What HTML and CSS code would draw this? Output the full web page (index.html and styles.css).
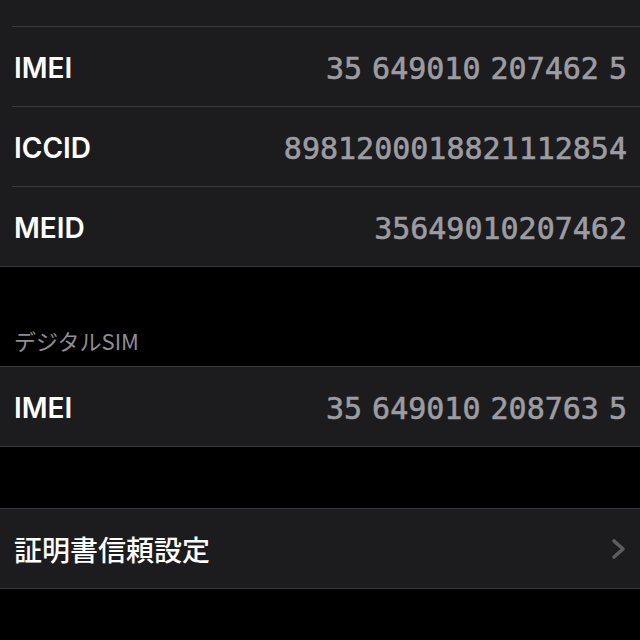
FILE: index.html
```html
<!DOCTYPE html>
<html lang="ja">
<head>
    <meta charset="UTF-8">
    <title>情報</title>
    <link rel="stylesheet" href="styles.css">
</head>
<body>
    <div class="group group-top">
        <div class="row row-partial"></div>
        <div class="row">
            <span class="label">IMEI</span>
            <span class="value">35 649010 207462 5</span>
        </div>
        <div class="row">
            <span class="label">ICCID</span>
            <span class="value">8981200018821112854</span>
        </div>
        <div class="row">
            <span class="label">MEID</span>
            <span class="value">35649010207462</span>
        </div>
    </div>

    <div class="group-header">デジタルSIM</div>

    <div class="group">
        <div class="row">
            <span class="label">IMEI</span>
            <span class="value">35 649010 208763 5</span>
        </div>
    </div>

    <div class="spacer"></div>

    <div class="group">
        <div class="row">
            <span class="label label-jp">証明書信頼設定</span>
            <svg class="chevron" width="16" height="22" viewBox="0 0 16 22">
                <polyline points="3,3 12,11 3,19" fill="none" stroke="#5c5c61" stroke-width="3.6" stroke-linecap="round" stroke-linejoin="round"/>
            </svg>
        </div>
    </div>
</body>
</html>
```

FILE: styles.css
```css
body {
    margin: 0;
    background-color: #000;
    font-family: Inter, "Noto Sans CJK JP", sans-serif;
    color: #fff;
}
.group {
    background-color: #1c1c1e;
    border-top: 1px solid #38383a;
    border-bottom: 1px solid #38383a;
}
.group-top {
    border-top: none;
}
.row {
    display: flex;
    justify-content: space-between;
    align-items: center;
    height: 79px;
    margin-left: 12px;
    padding: 0 13px 0 2px;
}
.row + .row {
    border-top: 1px solid #38383a;
}
.row-partial {
    height: 26px;
}
.label {
    font-size: 28px;
    font-weight: 600;
    padding-top: 3px;
}
.label-jp {
    font-family: "Noto Sans CJK JP", sans-serif;
    font-size: 28px;
    font-weight: 500;
    padding-top: 0;
}
.value {
    font-family: "DejaVu Sans Mono", monospace;
    font-size: 30px;
    color: #9c9ca2;
    -webkit-text-stroke: 0.6px #9c9ca2;
    word-spacing: -8px;
    padding-top: 3px;
}
.group-header {
    height: 99px;
    display: flex;
    align-items: flex-end;
    box-sizing: border-box;
    padding: 0 0 13px 14px;
    font-family: "Noto Sans CJK JP", sans-serif;
    font-size: 22px;
    line-height: 26px;
    color: #8e8e93;
}
.spacer {
    height: 61px;
}
.chevron {
    margin-right: 0;
}
```
